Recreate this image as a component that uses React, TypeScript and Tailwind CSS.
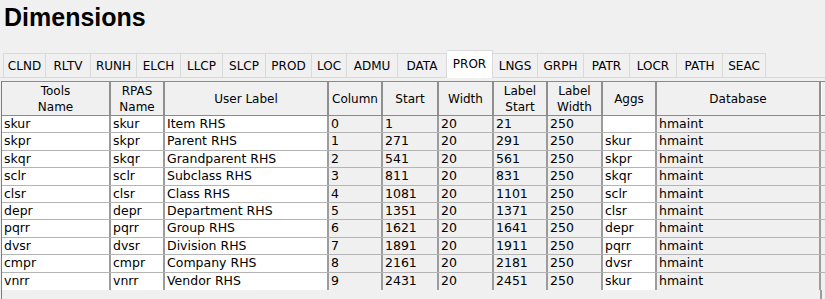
import React from 'react';

const tabs = [
  { label: 'CLND', w: 'w-[43px]' },
  { label: 'RLTV', w: 'w-[45px]' },
  { label: 'RUNH', w: 'w-[46px]' },
  { label: 'ELCH', w: 'w-[44px]' },
  { label: 'LLCP', w: 'w-[42px]' },
  { label: 'SLCP', w: 'w-[43px]' },
  { label: 'PROD', w: 'w-[46px]' },
  { label: 'LOC', w: 'w-[35px]' },
  { label: 'ADMU', w: 'w-[51px]' },
  { label: 'DATA', w: 'w-[49px]' },
  { label: 'PROR', w: 'w-[46px]', active: true },
  { label: 'LNGS', w: 'w-[45px]' },
  { label: 'GRPH', w: 'w-[46px]' },
  { label: 'PATR', w: 'w-[46px]' },
  { label: 'LOCR', w: 'w-[47px]' },
  { label: 'PATH', w: 'w-[46px]' },
  { label: 'SEAC', w: 'w-[43px]' },
];

const columns = [
  { title: ['Tools', 'Name'], w: 'w-[109px]', white: true },
  { title: ['RPAS', 'Name'], w: 'w-[54px]', white: true },
  { title: ['User Label'], w: 'w-[164px]', white: true },
  { title: ['Column'], w: 'w-[54px]' },
  { title: ['Start'], w: 'w-[56px]' },
  { title: ['Width'], w: 'w-[55px]' },
  { title: ['Label', 'Start'], w: 'w-[54px]' },
  { title: ['Label', 'Width'], w: 'w-[55px]' },
  { title: ['Aggs'], w: 'w-[54px]', white: true },
  { title: ['Database'], w: 'w-[164px]' },
];

const rows = [
  ['skur', 'skur', 'Item RHS', '0', '1', '20', '21', '250', '', 'hmaint'],
  ['skpr', 'skpr', 'Parent RHS', '1', '271', '20', '291', '250', 'skur', 'hmaint'],
  ['skqr', 'skqr', 'Grandparent RHS', '2', '541', '20', '561', '250', 'skpr', 'hmaint'],
  ['sclr', 'sclr', 'Subclass RHS', '3', '811', '20', '831', '250', 'skqr', 'hmaint'],
  ['clsr', 'clsr', 'Class RHS', '4', '1081', '20', '1101', '250', 'sclr', 'hmaint'],
  ['depr', 'depr', 'Department RHS', '5', '1351', '20', '1371', '250', 'clsr', 'hmaint'],
  ['pqrr', 'pqrr', 'Group RHS', '6', '1621', '20', '1641', '250', 'depr', 'hmaint'],
  ['dvsr', 'dvsr', 'Division RHS', '7', '1891', '20', '1911', '250', 'pqrr', 'hmaint'],
  ['cmpr', 'cmpr', 'Company RHS', '8', '2161', '20', '2181', '250', 'dvsr', 'hmaint'],
  ['vnrr', 'vnrr', 'Vendor RHS', '9', '2431', '20', '2451', '250', 'skur', 'hmaint'],
];

const App = () => {
  return (
    <div className="w-[825px] h-[299px] bg-[#f0f0f0] overflow-hidden flex flex-col text-black font-['DejaVu_Sans',sans-serif] text-[12px]">
      <h1 className="pl-[4px] pt-[3px] h-[32px] text-[25px] leading-[29px] font-bold font-['Liberation_Sans',Arial,sans-serif]">
        Dimensions
      </h1>

      {/* tab strip */}
      <div className="mt-[18px] h-[27px] flex items-end pl-[3px]">
        {tabs.map((tab, i) =>
          tab.active ? (
            <div
              key={tab.label}
              className={`${tab.w} relative z-10 h-[28px] -mb-px bg-white border-t border-r border-[#d9d9d9] flex items-center justify-center pb-[2px]`}
            >
              {tab.label}
            </div>
          ) : (
            <div
              key={tab.label}
              className={`${tab.w} h-[24px] border-t border-r border-[#d9d9d9] flex items-center justify-center ${i === 0 ? 'border-l' : ''}`}
            >
              {tab.label}
            </div>
          )
        )}
      </div>

      {/* panel */}
      <div className="flex-1 border-t border-[#d9d9d9] pt-[3px] pl-[1px] flex flex-col">
        <div className="flex-1 flex flex-col border-l border-[#7c7c7c]">
          {/* header */}
          <div className="flex h-[35px] border-t border-b border-[#8a8a8a] bg-[#f0f0f0]">
            {columns.map((col) => (
              <div
                key={col.title.join(' ')}
                className={`${col.w} shrink-0 border-r-2 border-[#8f8f8f] flex flex-col items-center justify-center leading-[16px]`}
              >
                {col.title.map((t) => (
                  <span key={t}>{t}</span>
                ))}
              </div>
            ))}
            <div className="flex-1 border-l border-white" />
          </div>

          {/* body */}
          {rows.map((row, r) => (
            <div
              key={r}
              className={`flex h-[17.4px] text-[12.5px] ${r < rows.length - 1 ? 'border-b border-[#b4b4b4]' : ''}`}
            >
              {row.map((val, c) => (
                <div
                  key={c}
                  className={`${columns[c].w} shrink-0 border-r-2 border-[#9c9c9c] pl-[2px] flex items-center leading-none whitespace-nowrap overflow-hidden ${columns[c].white ? 'bg-white' : 'bg-[#f0f0f0]'}`}
                >
                  {val}
                </div>
              ))}
              <div className="flex-1 bg-[#f0f0f0]" />
            </div>
          ))}

          <div className="flex-1 w-[820px] border-r-2 border-[#9c9c9c]" />
        </div>
      </div>
    </div>
  );
};

export default App;
